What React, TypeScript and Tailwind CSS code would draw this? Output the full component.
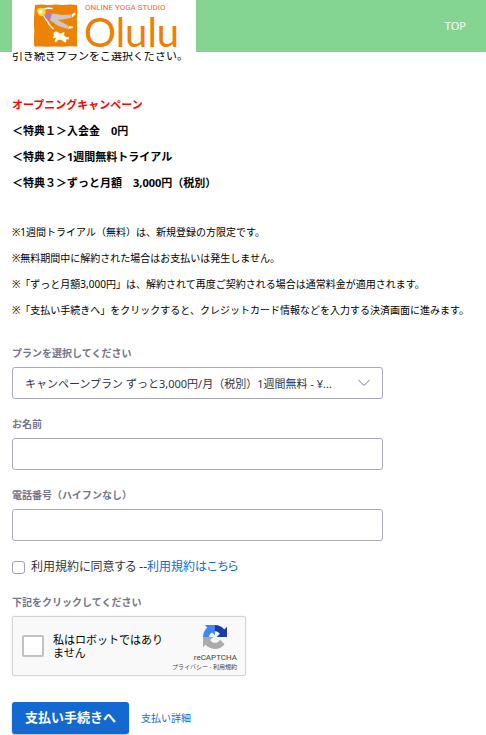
import type { ReactNode } from 'react';

const benefits = [
  '＜特典１＞入会金　0円',
  '＜特典２＞1週間無料トライアル',
  '＜特典３＞ずっと月額　3,000円（税別）',
];

const notes = [
  '※1週間トライアル（無料）は、新規登録の方限定です。',
  '※無料期間中に解約された場合はお支払いは発生しません。',
  '※「ずっと月額3,000円」は、解約されて再度ご契約される場合は通常料金が適用されます。',
  '※「支払い手続きへ」をクリックすると、クレジットカード情報などを入力する決済画面に進みます。',
];

function StudioMark() {
  return (
    <svg viewBox="0 0 44 44" className="mt-px size-11 shrink-0" aria-hidden="true">
      <path
        d="M1 1l6-.4 7 .5 8-.6 7 .5 7-.4 7 .5.4 7-.5 8 .4 8-.4 7 .3 11.500-7-.3-8 .5-7-.4-8 .4-7-.4-6 .2-.3-8 .4-8-.5-8 .5-9z"
        fill="#ee8204"
      />
      <path d="M10 12l6 9.500 3 3" fill="none" stroke="#fdf3e7" strokeWidth="1.500" strokeLinecap="round" />
      <path d="M9 5.500l5-1.500 4 .5" fill="none" stroke="#fdf3e7" strokeWidth="1.500" strokeLinecap="round" />
      <path d="M3 7c0-4 6-4 8-1 1.500 2 .5 5-2 6-3 .5-5-1-6-5z" fill="#f3dc45" />
      <circle cx="6.500" cy="7.500" r="2" fill="#fff8ee" />
      <path d="M10.500 10l5-2 3.500 2-.5 4-4.500 2-3-2.500z" fill="#bf78b5" />
      <path d="M18 9.500l10 1.500 9-.5.800 3.200-9.300 1.800-5 .3 5.500 3 5.500 3-1.500 3-9-3-8-5.500z" fill="#cac8c6" />
      <path d="M37.500 10.500l3.500-2 .6 1.500-3 3.500zM35 22l4 .5-.5 1.800-4.500.5z" fill="#fff8ee" />
      <circle cx="22" cy="30" r="2.500" fill="#fffaf2" />
      <path
        d="M23.500 28.500l3.500 1 2.500-1.500 1.200.8-1 2.200 2.300 2 3.200.2-.2 2-3.200.3.7 2-1.500 1.200-3.500-2.700-3-.3-2.500 2.800-1.500-1 1.500-3.500-3 .2v-2l3.500-1z"
        fill="#fffaf2"
      />
    </svg>
  );
}

function RecaptchaMark() {
  return (
    <svg viewBox="0 0 64 64" className="size-6" aria-hidden="true">
      <path
        d="M64 31.955l-.033-1.370V4.687l-7.160 7.160C50.948 4.674 42.033.093 32.050.093c-10.400 0-19.622 4.960-25.458 12.640l11.736 11.860a15.550 15.550 0 0 1 4.754-5.334c2.050-1.600 4.952-2.906 8.968-2.906.485 0 .86.057 1.135.163 4.976.393 9.288 3.140 11.828 7.124l-8.307 8.307L64 31.953"
        fill="#1c3aa9"
      />
      <path
        d="M31.862.094l-1.370.033H4.594l7.160 7.160C4.580 13.147 0 22.060 0 32.046c0 10.400 4.960 19.622 12.640 25.458L24.500 45.768a15.550 15.550 0 0 1-5.334-4.754c-1.600-2.050-2.906-4.952-2.906-8.968 0-.485.057-.86.163-1.135.393-4.976 3.140-9.288 7.124-11.828l8.307 8.307L31.860.095"
        fill="#4285f4"
      />
      <path
        d="M.001 32.045l.033 1.370v25.898l7.160-7.160c5.860 7.173 14.774 11.754 24.760 11.754 10.400 0 19.622-4.960 25.458-12.640l-11.736-11.860a15.550 15.550 0 0 1-4.754 5.334c-2.050 1.600-4.952 2.906-8.968 2.906-.485 0-.86-.057-1.135-.163-4.976-.393-9.288-3.140-11.828-7.124l8.307-8.307c-10.522.04-22.400.066-27.295-.005"
        fill="#ababab"
      />
    </svg>
  );
}

function Field({ id, label, children }: { id: string; label: string; children: ReactNode }) {
  return (
    <div className="flex flex-col gap-1.5">
      <label htmlFor={id} className="text-[10px] leading-4 font-semibold text-[#74748a]">
        {label}
      </label>
      {children}
    </div>
  );
}

export default function App() {
  return (
    <div className="bg-white font-['Noto_Sans','Noto_Sans_CJK_JP',sans-serif] text-black">
      <header className="sticky top-0 z-10 flex h-[52px] items-center justify-between bg-[#84d592] pr-5 pl-3">
        <a href="#home" className="flex h-full w-[184px] gap-1.5 bg-white pt-[3px] pl-[22px]">
          <StudioMark />
          <span className="flex flex-col whitespace-nowrap">
            <span className="pl-px font-['Roboto',sans-serif] text-[8px] leading-[10px] text-[#f0692a]">
              ONLINE YOGA STUDIO
            </span>
            <span className="font-['Lato',sans-serif] text-[40px] leading-[38px] text-[#ee7f04]">Olulu</span>
          </span>
        </a>
        <a href="#top" className="text-[11px] text-white">
          TOP
        </a>
      </header>

      <main className="-mt-[9px] px-3 pb-1">
        <p className="text-[11px] leading-[26px]">引き続きプランをご選択ください。</p>

        <section className="mt-[23px] text-[11px] leading-[26px] font-bold">
          <h2 className="text-[#ff0000]">オープニングキャンペーン</h2>
          {benefits.map((benefit) => (
            <p key={benefit}>{benefit}</p>
          ))}
        </section>

        <section className="mt-[23px] text-[10px] leading-[26px] whitespace-nowrap">
          {notes.map((note) => (
            <p key={note}>{note}</p>
          ))}
        </section>

        <form className="mt-[22px] max-w-[371px]" onSubmit={(e) => e.preventDefault()}>
          <div className="flex flex-col gap-[17px]">
            <Field id="plan" label="プランを選択してください">
              <div className="relative">
                <select
                  id="plan"
                  className="h-8 w-full appearance-none rounded-[3px] border border-[#a9a9b8] bg-white pt-0.5 pr-8 pl-3 text-[11px] text-[#32323e]"
                >
                  <option>キャンペーンプラン ずっと3,000円/月（税別）1週間無料 - ¥...</option>
                </select>
                <svg
                  viewBox="0 0 14 8"
                  className="pointer-events-none absolute top-3 right-3 h-2 w-3.5"
                  fill="none"
                  stroke="#74748a"
                  aria-hidden="true"
                >
                  <path d="M1.500 1l5.500 5.500L12.500 1" />
                </svg>
              </div>
            </Field>

            <Field id="name" label="お名前">
              <input id="name" type="text" className="h-8 rounded-[3px] border border-[#a9a9b8] px-3 text-[11px]" />
            </Field>

            <Field id="tel" label="電話番号（ハイフンなし）">
              <input id="tel" type="tel" className="h-8 rounded-[3px] border border-[#a9a9b8] px-3 text-[11px]" />
            </Field>

            <div className="mb-px flex items-center gap-1.5 text-[12px] leading-[18px] text-[#32323e] [font-feature-settings:'palt']">
              <input
                id="terms"
                type="checkbox"
                className="size-[13px] appearance-none rounded-[3px] border border-[#a0a0b2] bg-white checked:bg-[#1369cf]"
              />
              <span>
                <label htmlFor="terms">利用規約に同意する --</label>
                <a href="#terms-of-use" className="text-[#1369cf]">
                  利用規約はこちら
                </a>
              </span>
            </div>

            <Field id="robot" label="下記をクリックしてください">
              <div className="flex h-[60px] w-[234px] items-center rounded-[2px] border border-[#d3d3d3] bg-[#f9f9f9] pr-2 pl-[9px] shadow-[0_0_2px_rgba(0,0,0,0.1)]">
                <input
                  id="robot"
                  type="checkbox"
                  className="size-[22px] shrink-0 appearance-none rounded-[2px] border-2 border-[#c1c1c1] bg-white"
                />
                <label htmlFor="robot" className="ml-[9px] w-[112px] shrink-0 text-[11px] leading-[13px]">
                  私はロボットではありません
                </label>
                <div className="flex flex-1 flex-col items-end pt-1">
                  <div className="pr-2.5">
                    <RecaptchaMark />
                  </div>
                  <span className="mt-1 font-['Roboto',sans-serif] text-[8px] leading-[10px] text-[#444444]">
                    reCAPTCHA
                  </span>
                  <span className="text-[6px] leading-2 whitespace-nowrap text-[#444444]">
                    <a href="#privacy">プライバシー</a> - <a href="#recaptcha-terms">利用規約</a>
                  </span>
                </div>
              </div>
            </Field>
          </div>

          <div className="mt-[26px] flex items-center gap-3">
            <button
              type="submit"
              className="h-8 rounded-[3px] bg-[#1369cf] px-[13px] text-[13px] font-bold text-white shadow-[0_1px_2px_rgba(0,0,0,0.3)]"
            >
              支払い手続きへ
            </button>
            <a href="#details" className="text-[10px] text-[#1369cf]">
              支払い詳細
            </a>
          </div>
        </form>
      </main>
    </div>
  );
}
